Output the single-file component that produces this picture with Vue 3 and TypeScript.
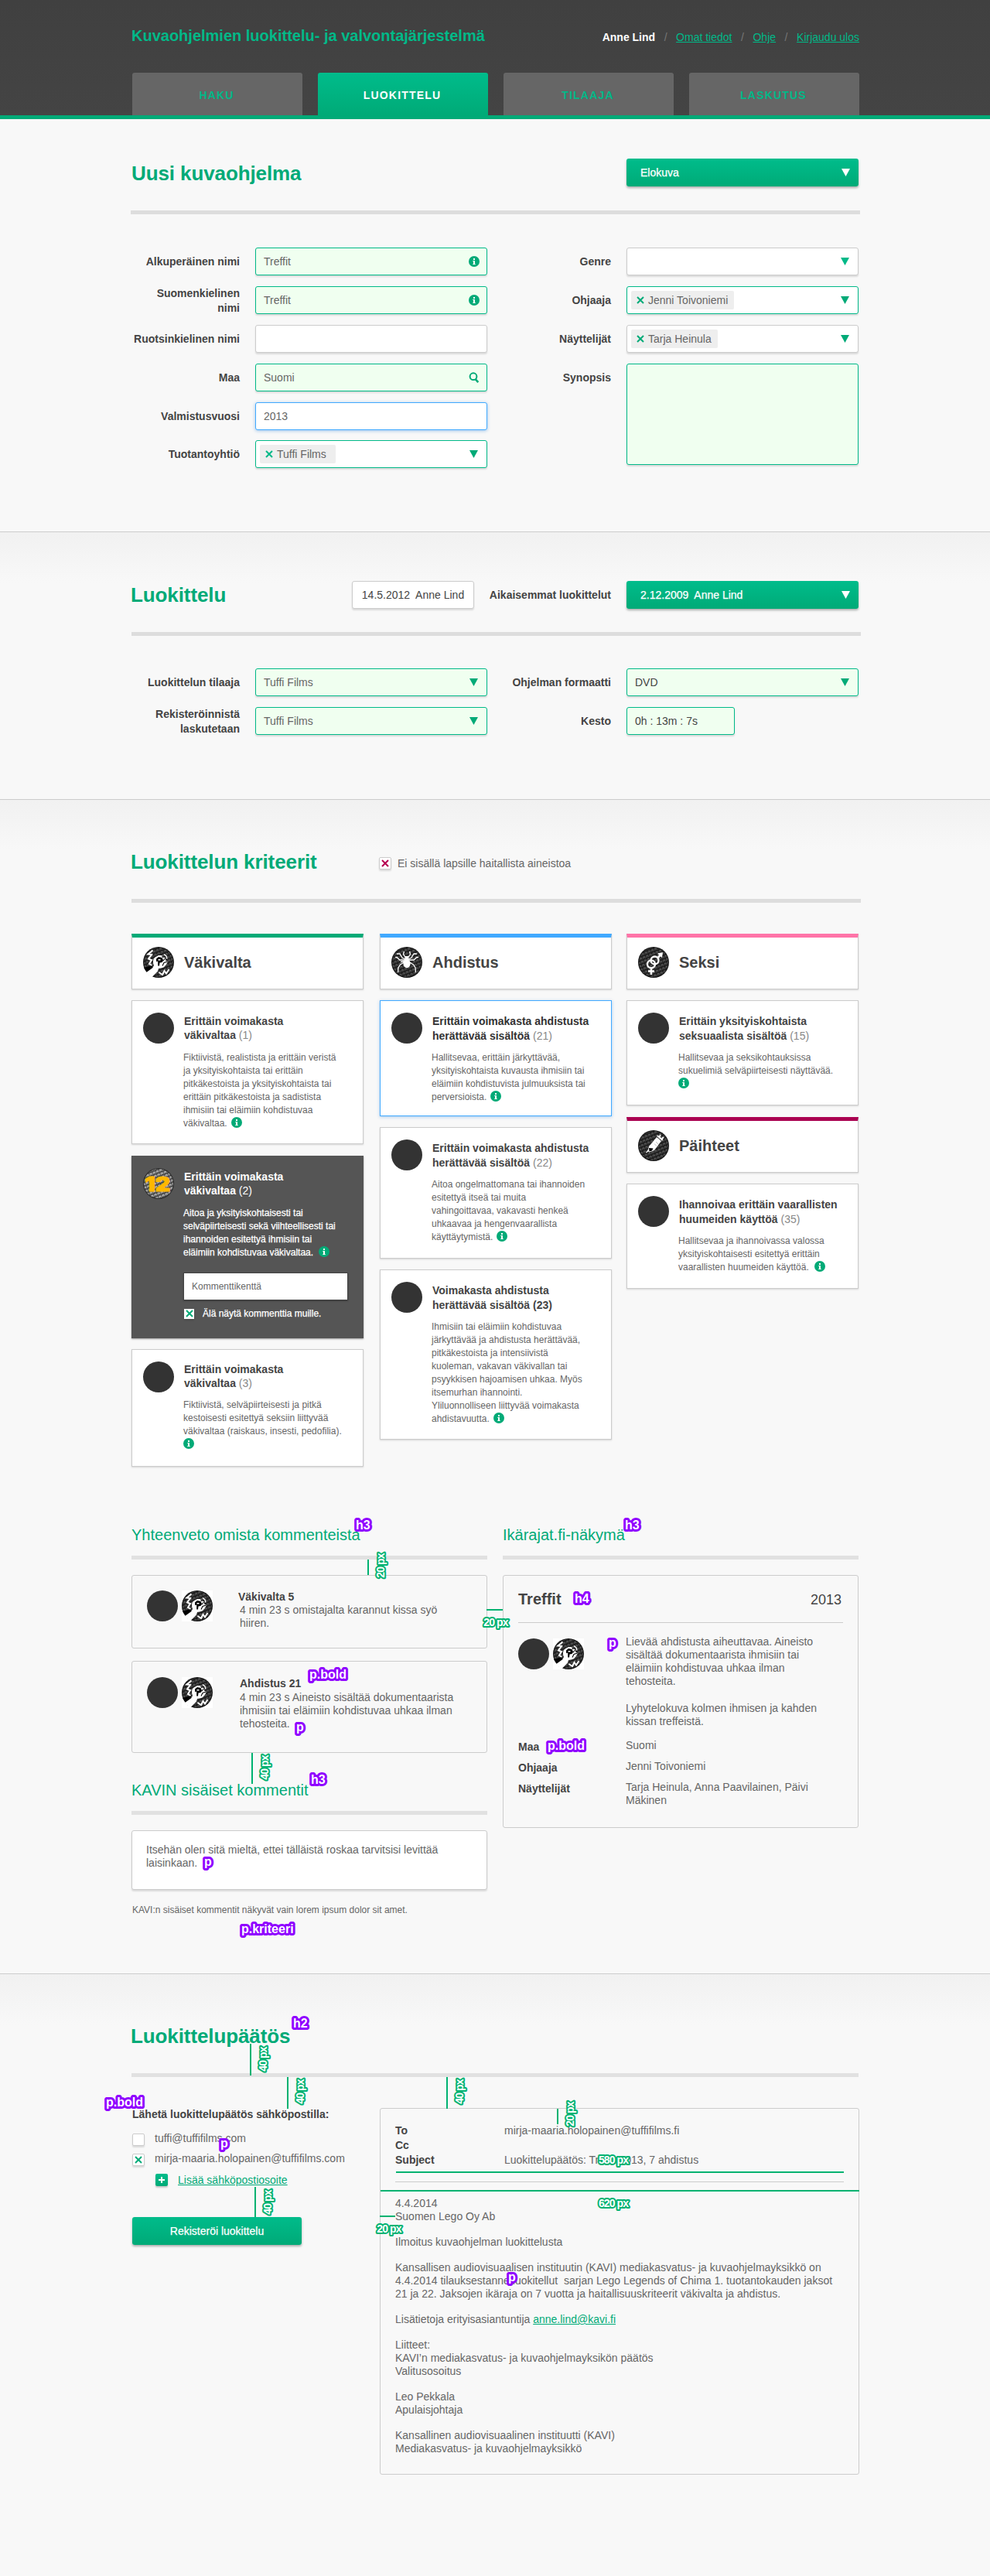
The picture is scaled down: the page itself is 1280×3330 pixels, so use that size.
<script setup lang="ts">
import { defineComponent, h } from 'vue'

interface Card {
  title: string[]
  count: string
  lines: string[]
  height: number
  strongCount?: boolean
  variant?: string
  comment?: boolean
  spaced?: boolean
}
interface Group {
  name: string
  icon: string
  accent: string
  cards: Card[]
}

const tabs = ['HAKU', 'LUOKITTELU', 'TILAAJA', 'LASKUTUS']

const columns: Group[][] = [
  [
    {
      name: 'Väkivalta',
      icon: 'fist',
      accent: '#00aa77',
      cards: [
        {
          title: ['Erittäin voimakasta', 'väkivaltaa'],
          count: '(1)',
          lines: ['Fiktiivistä, realistista ja erittäin veristä', 'ja yksityiskohtaista tai erittäin', 'pitkäkestoista ja yksityiskohtaista tai', 'erittäin pitkäkestoista ja sadistista', 'ihmisiin tai eläimiin kohdistuvaa', 'väkivaltaa.'],
          height: 186,
        },
        {
          title: ['Erittäin voimakasta', 'väkivaltaa'],
          count: '(2)',
          lines: ['Aitoa ja yksityiskohtaisesti tai', 'selväpiirteisesti sekä viihteellisesti tai', 'ihannoiden esitettyä ihmisiin tai', 'eläimiin kohdistuvaa väkivaltaa.'],
          height: 236,
          variant: 'dark',
          comment: true,
          spaced: true,
        },
        {
          title: ['Erittäin voimakasta', 'väkivaltaa'],
          count: '(3)',
          lines: ['Fiktiivistä, selväpiirteisesti ja pitkä', 'kestoisesti esitettyä seksiin liittyvää', 'väkivaltaa (raiskaus, insesti, pedofilia).', ''],
          height: 152,
          variant: 'tight',
        },
      ],
    },
  ],
  [
    {
      name: 'Ahdistus',
      icon: 'spider',
      accent: '#40a9ff',
      cards: [
        {
          title: ['Erittäin voimakasta ahdistusta', 'herättävää sisältöä'],
          count: '(21)',
          lines: ['Hallitsevaa, erittäin järkyttävää,', 'yksityiskohtaista kuvausta ihmisiin tai', 'eläimiin kohdistuvista julmuuksista tai', 'perversioista.'],
          height: 150,
          variant: 'focus',
        },
        {
          title: ['Erittäin voimakasta ahdistusta', 'herättävää sisältöä'],
          count: '(22)',
          lines: ['Aitoa ongelmattomana tai ihannoiden', 'esitettyä itseä tai muita', 'vahingoittavaa, vakavasti henkeä', 'uhkaavaa ja hengenvaarallista', 'käyttäytymistä.'],
          height: 170,
        },
        {
          title: ['Voimakasta ahdistusta', 'herättävää sisältöä'],
          count: '(23)',
          strongCount: true,
          lines: ['Ihmisiin tai eläimiin kohdistuvaa', 'järkyttävää ja ahdistusta herättävää,', 'pitkäkestoista ja intensiivistä', 'kuoleman, vakavan väkivallan tai', 'psyykkisen hajoamisen uhkaa. Myös', 'itsemurhan ihannointi.', 'Yliluonnolliseen liittyvää voimakasta', 'ahdistavuutta.'],
          height: 220,
        },
      ],
    },
  ],
  [
    {
      name: 'Seksi',
      icon: 'gender',
      accent: '#ff73a8',
      cards: [
        {
          title: ['Erittäin yksityiskohtaista', 'seksuaalista sisältöä'],
          count: '(15)',
          lines: ['Hallitsevaa ja seksikohtauksissa', 'sukuelimiä selväpiirteisesti näyttävää.', ''],
          height: 136,
        },
      ],
    },
    {
      name: 'Päihteet',
      icon: 'syringe',
      accent: '#aa0050',
      cards: [
        {
          title: ['Ihannoivaa erittäin vaarallisten', 'huumeiden käyttöä'],
          count: '(35)',
          lines: ['Hallitsevaa ja ihannoivassa valossa', 'yksityiskohtaisesti esitettyä erittäin', 'vaarallisten huumeiden käyttöä.'],
          height: 136,
          spaced: true,
        },
      ],
    },
  ],
]

const mail: string[][] = [
  ['4.4.2014', 'Suomen Lego Oy Ab'],
  ['Ilmoitus kuvaohjelman luokittelusta'],
  [
    'Kansallisen audiovisuaalisen instituutin (KAVI) mediakasvatus- ja kuvaohjelmayksikkö on',
    '4.4.2014 tilauksestanne luokitellut\u00a0 sarjan Lego Legends of Chima 1. tuotantokauden jaksot',
    '21 ja 22. Jaksojen ikäraja on 7 vuotta ja haitallisuuskriteerit väkivalta ja ahdistus.',
  ],
  ['Lisätietoja erityisasiantuntija '],
  ['Liitteet:', 'KAVI’n mediakasvatus- ja kuvaohjelmayksikön päätös', 'Valitusosoitus'],
  ['Leo Pekkala', 'Apulaisjohtaja'],
  ['Kansallinen audiovisuaalinen instituutti (KAVI)', 'Mediakasvatus- ja kuvaohjelmayksikkö'],
]

// Annotation tags: left edge and baseline of the text.
const tags = [
  { t: 'h3', x: 460, y: 1977 },
  { t: 'p.bold', x: 400, y: 2170 },
  { t: 'p', x: 383, y: 2238 },
  { t: 'h3', x: 808, y: 1977 },
  { t: 'h4', x: 743, y: 2072 },
  { t: 'p', x: 787, y: 2129 },
  { t: 'p.bold', x: 708, y: 2262 },
  { t: 'h3', x: 402, y: 2306 },
  { t: 'p', x: 264, y: 2412 },
  { t: 'p.kriteeri', x: 312, y: 2499 },
  { t: 'h2', x: 379, y: 2621 },
  { t: 'p.bold', x: 137, y: 2723 },
  { t: 'p', x: 285, y: 2776 },
  { t: 'p', x: 657, y: 2949 },
]

// Measuring lines.
const rules = [
  { x: 475, y: 2016, w: 2, h: 20 },
  { x: 629, y: 2080, w: 21, h: 2 },
  { x: 325, y: 2266, w: 2, h: 40 },
  { x: 323, y: 2642, w: 2, h: 41 },
  { x: 371, y: 2685, w: 2, h: 41 },
  { x: 577, y: 2685, w: 2, h: 41 },
  { x: 329, y: 2827, w: 2, h: 39 },
  { x: 720, y: 2726, w: 2, h: 20 },
  { x: 512, y: 2807, w: 579, h: 2 },
  { x: 492, y: 2831, w: 619, h: 2 },
  { x: 491, y: 2864, w: 20, h: 2 },
]

// Measurement captions, placed by their centre.
const sizes = [
  { t: '20 px', x: 492, y: 2024, v: true },
  { t: '20 px', x: 641, y: 2097, v: false },
  { t: '40 px', x: 342, y: 2285, v: true },
  { t: '40 px', x: 340, y: 2662, v: true },
  { t: '40 px', x: 388, y: 2704, v: true },
  { t: '40 px', x: 594, y: 2704, v: true },
  { t: '40 px', x: 346, y: 2847, v: true },
  { t: '20 px', x: 737, y: 2733, v: true },
  { t: '580 px', x: 793, y: 2792, v: false },
  { t: '620 px', x: 793, y: 2848, v: false },
  { t: '20 px', x: 503, y: 2881, v: false },
]

const Info = defineComponent({
  setup: () => () =>
    h('svg', { class: 'info', width: 14, height: 14, viewBox: '0 0 14 14' }, [
      h('circle', { cx: 7, cy: 7, r: 7, fill: '#00aa77' }),
      h('path', { d: 'M6 3h2v2H6zM5.3 6H8v4h.7v1H5.3v-1H6V7h-.7z', fill: '#fff' }),
    ]),
})

const Arrow = defineComponent({
  props: { fill: { type: String, default: '#00aa77' } },
  setup: (p) => () =>
    h('svg', { class: 'arrow', width: 11, height: 10, viewBox: '0 0 11 10' }, [h('path', { d: 'M0 0h11L5.5 10z', fill: p.fill })]),
})

const Cross = defineComponent({
  props: { color: { type: String, default: '#00aa77' }, size: { type: Number, default: 10 } },
  setup: (p) => () =>
    h('svg', { class: 'cross', width: p.size, height: p.size, viewBox: '0 0 10 10' }, [
      h('path', { d: 'M1 1l8 8M9 1l-8 8', stroke: p.color, 'stroke-width': 2, fill: 'none' }),
    ]),
})

const w = { fill: '#fff' }
const line = (d: string, sw: number, stroke = '#fff') => h('path', { d, fill: 'none', stroke, 'stroke-width': sw, 'stroke-linejoin': 'miter' })
const art: Record<string, () => unknown[]> = {
  fist: () => [
    h('path', { d: 'M1 27L12 24v10L8 37z', fill: '#000' }),
    h('path', { d: 'M3.500 33.500L12.500 27l1.500-3c-1.800-4-1.200-8.500 1.500-10.500L20 11l5 0 1.500 2.500L29 15l0 2.500 3 1.500-2.500 4.500-3 3-3.500 1-3 .5-1 3.500-8 8L7 36.500z', ...w }),
    line('M12.500 4.500L6.500 9.500l4.500 .5L7 15.500l4 1.500L8 22l3.500 2', 2),
    line('M20.500 33l4.500 3 2.500-5 2.500 3.500L33.500 29', 2),
    h('path', { d: 'M17 15.500l3-2.500 4.500 1 1.500 3-1.500 3-3 .5-.5 4-1.800 0 0-6-2 .8z', fill: '#000' }),
    h('path', { d: 'M19.500 16h3v1.500h-3z', ...w }),
    line('M24.500 11.500l1.500 2.500M28.500 15l-3 3.500M31.500 19l-4.500 1.500-2 4', 1.1, '#000'),
    line('M27 9.500l3 2.500 1 3.500', 1.4),
  ],
  spider: () => [
    h('ellipse', { cx: 20, cy: 21.5, rx: 4.6, ry: 5.8, ...w }),
    h('path', { d: 'M17 17l1-5h4l1 5z', ...w }),
    line('M18 16l-4-2-3-5-4 0M17 17l-6 0-4-3.500-2 0M16.500 20l-5 3-2.500 4-.5 6M17 18.500l-5 1M18 13.500l-2.500-4 1-3.500M22 16l4-2 3-5 4 0M23 17l6 0 4-3.500 2 0M23.500 20l5 3 2.500 4 .5 6M22 13.500l2.500-4-1-3.500', 1.3),
  ],
  gender: () => [
    h('circle', { cx: 17, cy: 22.3, r: 5, fill: 'none', stroke: '#fff', 'stroke-width': 2.3 }),
    h('circle', { cx: 21.5, cy: 17.5, r: 5, fill: 'none', stroke: '#fff', 'stroke-width': 2.3 }),
    line('M25.500 14l5-5M17 27.500V36M13 31.500h8', 2.5),
    h('path', { d: 'M25 8.500l7-1.500-1.200 7z', ...w }),
  ],
  syringe: () => [
    h('path', { d: 'M14 21L24 9l6 5-9 12-6.500 2.500-2-1.500z', ...w }),
    h('path', { d: 'M24 7.500l1.800-1 6.500 5.500-1.300 1.800z', ...w }),
    line('M27.500 9l1.500-3M30.500 11.500l2.500-2.500', 1.8),
    line('M14 25.500l-3.500 3.500', 1.2),
    h('path', { d: 'M14 23l5.500 .5-1.500 3-3.500 1z', fill: '#000' }),
    line('M23 15l3 3M21 17.500l3 3', 0.8, '#aaa'),
  ],
  twelve: () => [
    h('text', { x: 18.7, y: 29.5, 'text-anchor': 'middle', 'font-size': 26, 'font-weight': 900, 'font-family': 'Inter,"Liberation Sans",sans-serif', fill: '#ffb700', stroke: '#ffb700', 'stroke-width': 1, textLength: 33, lengthAdjust: 'spacingAndGlyphs' }, '12'),
  ],
}

let seq = 0
const Badge = defineComponent({
  props: { name: { type: String, required: true } },
  setup: (p) => {
    const id = `weave${seq++}`
    const light = p.name === 'twelve'
    return () =>
      h('svg', { class: 'badge', width: 40, height: 40, viewBox: '0 0 40 40' }, [
        h('defs', [
          h('pattern', { id, width: 4.5, height: 4.5, patternUnits: 'userSpaceOnUse', patternTransform: 'rotate(-22)' }, [
            h('path', { d: 'M.8 3.800V1h2.500v2.800M2 1v2', stroke: light ? '#b4b4b4' : '#666', 'stroke-width': light ? 1.1 : 0.8, fill: 'none' }),
          ]),
        ]),
        h('circle', { cx: 20, cy: 20, r: 20, fill: light ? '#2c2c2c' : '#151515' }),
        h('circle', { cx: 20, cy: 20, r: 19, fill: `url(#${id})` }),
        ...(art[p.name]() as []),
      ])
  },
})
</script>

<template>
  <div class="page">
    <header>
      <div class="top">
        <h1>Kuvaohjelmien luokittelu- ja valvontajärjestelmä</h1>
        <nav class="user"><b>Anne Lind</b><i>/</i><a>Omat tiedot</a><i>/</i><a>Ohje</a><i>/</i><a>Kirjaudu ulos</a></nav>
      </div>
      <nav class="tabs">
        <a v-for="t in tabs" :key="t" :class="{ active: t === 'LUOKITTELU' }">{{ t }}</a>
      </nav>
    </header>

    <section class="first">
      <div class="head">
        <h2>Uusi kuvaohjelma</h2>
        <div class="select green up"><span>Elokuva</span><Arrow fill="#fff" /></div>
      </div>
      <div class="bar shift"></div>
      <div class="form">
        <div class="col">
          <div class="row"><label>Alkuperäinen nimi</label><div class="field ok">Treffit<Info /></div></div>
          <div class="row"><label>Suomenkielinen<br />nimi</label><div class="field ok">Treffit<Info /></div></div>
          <div class="row"><label>Ruotsinkielinen nimi</label><div class="field"></div></div>
          <div class="row">
            <label>Maa</label>
            <div class="field ok">
              Suomi
              <svg class="lens" width="14" height="14" viewBox="0 0 14 14"><circle cx="6" cy="5.700" r="4.400" fill="none" stroke="#00aa77" stroke-width="2" /><path d="M8.500 9l3.800 4.200" stroke="#00aa77" stroke-width="2.600" /></svg>
            </div>
          </div>
          <div class="row five"><label>Valmistusvuosi</label><div class="field focus">2013</div></div>
          <div class="row">
            <label>Tuotantoyhtiö</label>
            <div class="field edge tagged"><span class="tag wide"><Cross color="#00b988" />Tuffi Films</span><Arrow /></div>
          </div>
        </div>
        <div class="col">
          <div class="row"><label>Genre</label><div class="field right"><Arrow fill="#00b988" /></div></div>
          <div class="row">
            <label>Ohjaaja</label>
            <div class="field edge tagged"><span class="tag"><Cross />Jenni Toivoniemi</span><Arrow /></div>
          </div>
          <div class="row">
            <label>Näyttelijät</label>
            <div class="field tagged"><span class="tag"><Cross />Tarja Heinula</span><Arrow /></div>
          </div>
          <div class="row"><label>Synopsis</label><div class="field ok area"></div></div>
        </div>
      </div>
    </section>

    <section class="second">
      <div class="head">
        <h2>Luokittelu</h2>
        <div class="field who">14.5.2012&nbsp; Anne Lind</div>
        <label class="earlier">Aikaisemmat luokittelut</label>
        <div class="select green"><span>2.12.2009&nbsp; Anne Lind</span><Arrow fill="#fff" /></div>
      </div>
      <div class="bar"></div>
      <div class="form">
        <div class="col">
          <div class="row"><label>Luokittelun tilaaja</label><div class="field ok">Tuffi Films<Arrow /></div></div>
          <div class="row"><label>Rekisteröinnistä<br />laskutetaan</label><div class="field ok">Tuffi Films<Arrow /></div></div>
        </div>
        <div class="col">
          <div class="row"><label>Ohjelman formaatti</label><div class="field ok ink">DVD<Arrow /></div></div>
          <div class="row"><label>Kesto</label><div class="field ok ink short">0h : 13m : 7s</div></div>
        </div>
      </div>
    </section>

    <section class="third">
      <div class="head">
        <h2>Luokittelun kriteerit</h2>
        <div class="harmless"><span class="box"><Cross color="#b5004f" /></span>Ei sisällä lapsille haitallista aineistoa</div>
      </div>
      <div class="bar"></div>

      <div class="criteria">
        <div v-for="(col, ci) in columns" :key="ci" class="ccol" :class="'c' + ci">
          <template v-for="g in col" :key="g.name">
            <div class="chead" :style="{ borderTopColor: g.accent }"><Badge :name="g.icon" /><h4>{{ g.name }}</h4></div>
            <article v-for="card in g.cards" :key="card.count" class="card" :class="card.variant" :style="{ height: card.height + 'px' }">
              <Badge v-if="card.variant === 'dark'" name="twelve" />
              <span v-else class="dot"></span>
              <div class="ctext">
                <h5>{{ card.title[0] }}<br />{{ card.title[1] }} <span :class="{ strong: card.strongCount }">{{ card.count }}</span></h5>
                <p>
                  <template v-for="(l, i) in card.lines" :key="i"><br v-if="i" />{{ l }}</template><span v-if="card.lines[card.lines.length - 1]" class="sp" :class="{ more: card.spaced }"></span><Info />
                </p>
                <template v-if="card.comment">
                  <div class="comment">Kommenttikenttä</div>
                  <div class="hide"><span class="box small"><Cross /></span>Älä näytä kommenttia muille.</div>
                </template>
              </div>
            </article>
          </template>
        </div>
      </div>

      <div class="summary">
        <div class="half">
          <h3>Yhteenveto omista kommenteista</h3>
          <div class="bar light"></div>
          <div class="note n1">
            <span class="dot"></span><span class="sq"><Badge name="fist" /></span>
            <p><b>Väkivalta 5</b><br />4 min 23 s omistajalta karannut kissa syö<br />hiiren.</p>
          </div>
          <div class="note n2">
            <span class="dot"></span><span class="sq"><Badge name="fist" /></span>
            <p><b>Ahdistus 21</b><br />4 min 23 s Aineisto sisältää dokumentaarista<br />ihmisiin tai eläimiin kohdistuvaa uhkaa ilman<br />tehosteita.</p>
          </div>
          <h3>KAVIN sisäiset kommentit</h3>
          <div class="bar light"></div>
          <div class="internal">Itsehän olen sitä mieltä, ettei tälläistä roskaa tarvitsisi levittää<br />laisinkaan.</div>
          <p class="fine">KAVI:n sisäiset kommentit näkyvät vain lorem ipsum dolor sit amet.</p>
        </div>
        <div class="half">
          <h3>Ikärajat.fi-näkymä</h3>
          <div class="bar light"></div>
          <div class="preview">
            <div class="ptop"><h4>Treffit</h4><span>2013</span></div>
            <div class="pmain">
              <span class="dot"></span><span class="sq"><Badge name="fist" /></span>
              <div class="ptext">
                <p>Lievää ahdistusta aiheuttavaa. Aineisto<br />sisältää dokumentaarista ihmisiin tai<br />eläimiin kohdistuvaa uhkaa ilman<br />tehosteita.</p>
                <p>Lyhytelokuva kolmen ihmisen ja kahden<br />kissan treffeistä.</p>
              </div>
            </div>
            <div class="pair"><b>Maa</b><span>Suomi</span></div>
            <div class="pair"><b>Ohjaaja</b><span>Jenni Toivoniemi</span></div>
            <div class="pair"><b>Näyttelijät</b><span>Tarja Heinula, Anna Paavilainen, Päivi<br />Mäkinen</span></div>
          </div>
        </div>
      </div>
    </section>

    <section class="fourth">
      <div class="head"><h2>Luokittelupäätös</h2></div>
      <div class="bar light full"></div>
      <div class="decision">
        <div class="send">
          <b>Lähetä luokittelupäätös sähköpostilla:</b>
          <div class="opt"><span class="box"></span>tuffi@tuffifilms.com</div>
          <div class="opt"><span class="box"><Cross /></span>mirja-maaria.holopainen@tuffifilms.com</div>
          <div class="opt add">
            <span class="plus"><svg width="8" height="8" viewBox="0 0 8 8"><path d="M3 0h2v3h3v2H5v3H3V5H0V3h3z" fill="#fff" /></svg></span><a>Lisää sähköpostiosoite</a>
          </div>
          <button type="button">Rekisteröi luokittelu</button>
        </div>
        <div class="mail">
          <div class="mhead">
            <div><b>To</b><span>mirja-maaria.holopainen@tuffifilms.fi</span></div>
            <div><b>Cc</b></div>
            <div><b>Subject</b><span>Luokittelupäätös: Treffit 2013, 7 ahdistus</span></div>
          </div>
          <p v-for="(para, i) in mail" :key="i">
            <template v-for="(l, j) in para" :key="j"><br v-if="j" />{{ l }}</template><a v-if="i === 3">anne.lind@kavi.fi</a>
          </p>
        </div>
      </div>
    </section>

    <svg class="marks" width="1280" height="3330" viewBox="0 0 1280 3330">
      <rect v-for="(r, i) in rules" :key="'r' + i" :x="r.x" :y="r.y" :width="r.w" :height="r.h" fill="#00b271" />
      <text v-for="(s, i) in sizes" :key="'s' + i" class="size" text-anchor="middle" y="5" :transform="`translate(${s.x} ${s.y})${s.v ? ' rotate(-90)' : ''}`">{{ s.t }}</text>
      <text v-for="(t, i) in tags" :key="'t' + i" class="el" :x="t.x" :y="t.y">{{ t.t }}</text>
    </svg>
  </div>
</template>

<style>
body {
  margin: 0;
  background: #f8f8f8;
}
svg {
  flex: none;
}
svg.info {
  vertical-align: -2px;
}
</style>

<style scoped>
* {
  box-sizing: border-box;
}
.page {
  position: relative;
  height: 3330px;
  overflow: hidden;
  background: #f8f8f8;
  font: 14px/18px 'Liberation Sans', Arial, Helvetica, sans-serif;
  color: #666;
}
h1, h2, h3, h4, h5, p {
  margin: 0;
}
a {
  color: #00aa77;
  text-decoration: underline;
}
header {
  height: 154px;
  background: linear-gradient(#404040, #444);
  border-bottom: 5px solid #00aa77;
  padding: 0 169px 0 171px;
}
.top {
  display: flex;
  justify-content: space-between;
  height: 94px;
}
h1 {
  font-size: 20px;
  line-height: 22px;
  color: #00b988;
  margin: 35px 0 0 -1px;
}
.user {
  margin-top: 39px;
  display: flex;
  color: #fff;
}
.user a {
  color: #00b988;
}
.user i {
  font-style: normal;
  color: #777;
  width: 27px;
  text-align: center;
}
.tabs {
  display: flex;
  gap: 20px;
}
.tabs a {
  width: 220px;
  height: 55px;
  border-radius: 3px 3px 0 0;
  background: #666;
  text-align: center;
  text-decoration: none;
  font-weight: bold;
  letter-spacing: 1.2px;
  line-height: 59px;
  color: #00b988;
  padding-right: 2px;
}
.tabs .active {
  background: linear-gradient(#00bc8b, #00aa77);
  color: #fff;
}
section {
  padding: 0 167px 0 170px;
}
.first {
  height: 533px;
  padding-top: 52px;
}
.second, .third, .fourth {
  border-top: 1px solid #ccc;
  background: linear-gradient(#f1f1f1, #f8f8f8 65px);
}
.second {
  height: 346px;
  padding-top: 63px;
}
.third {
  height: 1518px;
  padding-top: 62px;
}
.fourth {
  height: 779px;
  padding-top: 62px;
}
.head {
  display: flex;
  height: 66px;
  width: 940px;
}
h2 {
  font-size: 26px;
  line-height: 36px;
  letter-spacing: -0.1px;
  color: #00aa77;
  flex: 1;
  margin-left: -1px;
}
.first h2 {
  padding-left: 1px;
}
.bar {
  height: 5px;
  background: #ddd;
}
.shift {
  margin: 0 1px 0 -1px;
}
.light {
  background: #e1e1e1;
}
.full {
  width: 940px;
}
.select {
  width: 300px;
  height: 36px;
  border-radius: 3px;
  display: flex;
  justify-content: space-between;
  align-items: center;
  padding: 0 11px 0 18px;
  color: #fff;
  -webkit-text-stroke: 0.25px #fff;
  background: linear-gradient(#00bc8b, #00aa77);
  box-shadow: 0 2px 3px rgba(0, 0, 0, 0.3);
}
.up {
  margin-top: -1px;
}
.form {
  display: flex;
  gap: 20px;
  width: 940px;
  padding-top: 43px;
}
.second .form {
  padding-top: 42px;
}
.col {
  width: 460px;
}
.row {
  display: flex;
  gap: 20px;
  height: 36px;
  margin-bottom: 14px;
}
.five {
  margin-bottom: 13px;
}
label {
  width: 140px;
  height: 36px;
  padding-top: 1px;
  display: flex;
  align-items: center;
  justify-content: flex-end;
  text-align: right;
  font-weight: bold;
  color: #444;
  line-height: 19px;
  white-space: nowrap;
}
.field {
  width: 300px;
  height: 36px;
  border: 1px solid #ccc;
  border-radius: 3px;
  background: #fff;
  box-shadow: 0 2px 2px rgba(0, 0, 0, 0.12);
  padding: 0 11px 0 10px;
  line-height: 34px;
  display: flex;
  align-items: center;
  justify-content: space-between;
}
.field .info, .field .lens {
  margin-right: -2px;
}
.field.ok {
  background: #f0fff0;
}
.field.ok, .field.edge {
  border-color: #00b988;
}
.field.focus {
  border-color: #40a9ff;
  box-shadow: 0 1px 4px rgba(40, 130, 220, 0.45);
}
.field.ink, .field.who {
  color: #444;
}
.field.right {
  justify-content: flex-end;
}
.field.tagged {
  padding-left: 5px;
}
.field.area {
  height: 131px;
}
.field.short {
  width: 140px;
}
.tag {
  height: 24px;
  line-height: 24px;
  background: #eee;
  border-radius: 2px;
  display: flex;
  align-items: center;
  gap: 5px;
  padding: 0 8px 0 7px;
}
.tag.wide {
  padding-right: 12px;
}
.field.who {
  width: 158px;
  padding: 0;
  justify-content: center;
}
.earlier {
  width: 197px;
  padding-right: 20px;
}
.harmless {
  width: 620px;
  padding: 11px 0 0 0;
  line-height: 19px;
  display: flex;
  align-items: flex-start;
  gap: 8px;
}
.box {
  flex: none;
  width: 16px;
  height: 16px;
  border: 1px solid #ccc;
  border-radius: 2px;
  background: #fff;
  box-shadow: 0 2px 2px rgba(0, 0, 0, 0.12);
  display: flex;
  align-items: center;
  justify-content: center;
}
.harmless .box {
  margin-top: 1px;
}
.criteria {
  display: flex;
  padding-top: 40px;
  height: 806px;
}
.ccol {
  width: 300px;
}
.c1 {
  margin: 0 19px 0 21px;
}
.chead {
  height: 72px;
  border: 1px solid #ccc;
  border-top: 5px solid;
  background: #fff;
  box-shadow: 0 1px 2px rgba(0, 0, 0, 0.15);
  padding: 12px 14px;
  display: flex;
  gap: 13px;
}
h4 {
  font-size: 20px;
  line-height: 22px;
  color: #444;
}
.chead h4 {
  margin-top: 9px;
}
.card {
  margin-top: 14px;
  border: 1px solid #ccc;
  background: #fff;
  box-shadow: 0 1px 2px rgba(0, 0, 0, 0.15);
  padding: 15px 14px;
  display: flex;
  gap: 12px;
}
.card + .chead {
  margin-top: 15px;
}
.c0 .card + .card.dark {
  margin-top: 15px;
}
.dot {
  flex: none;
  width: 40px;
  height: 40px;
  border-radius: 50%;
  background: #333;
}
.ctext {
  white-space: nowrap;
  padding-top: 2px;
}
h5 {
  height: 48px;
  padding-left: 1px;
  font-size: 14px;
  line-height: 19px;
  color: #444;
}
.c0 h5 {
  line-height: 18px;
}
h5 span {
  font-weight: normal;
  color: #888;
}
h5 .strong {
  font-weight: bold;
  color: #444;
}
.ctext p {
  font-size: 12px;
  line-height: 17px;
}
.sp {
  display: inline-block;
  width: 5px;
}
.sp.more {
  width: 7px;
}
.focus h5 {
  color: #333;
}
.card.focus {
  border-color: #40a9ff;
  box-shadow: 0 1px 4px rgba(40, 130, 220, 0.4);
}
.dark {
  background: #555;
  border-color: #555;
  color: #fff;
  box-shadow: 0 1px 2px rgba(0, 0, 0, 0.4);
}
.dark h5, .dark h5 span {
  color: #fff;
}
.dark p, .dark .hide {
  -webkit-text-stroke: 0.25px #fff;
}
.tight .ctext {
  padding-top: 1px;
}
.tight h5 {
  height: 47px;
}
.comment {
  width: 213px;
  height: 36px;
  margin-top: 17px;
  border: 1px solid #444;
  background: #fff;
  color: #666;
  font-size: 12px;
  line-height: 34px;
  padding-left: 10px;
  box-shadow: 0 1px 2px rgba(0, 0, 0, 0.3);
}
.hide {
  display: flex;
  align-items: center;
  gap: 11px;
  font-size: 12px;
  margin: 8px 0 0 1px;
}
.small {
  width: 13px;
  height: 13px;
  border: 0;
  border-radius: 0;
}
.summary {
  display: flex;
  gap: 20px;
}
.half {
  width: 460px;
}
h3 {
  font-size: 20px;
  line-height: 22px;
  font-weight: normal;
  color: #00aa77;
  margin-bottom: 16px;
}
.note, .preview {
  border: 1px solid #ccc;
  border-radius: 3px;
}
.note {
  display: flex;
  height: 95px;
  margin-top: 20px;
  padding: 19px;
  line-height: 17px;
}
.note b, .pair b, .mhead b, .send > b {
  color: #444;
}
.sq {
  flex: none;
  width: 40px;
  height: 40px;
  margin-left: 5px;
  background: #fff;
}
.sq svg {
  display: block;
}
.note p {
  margin-left: 35px;
  white-space: nowrap;
}
.n1 b {
  margin-left: -2px;
}
.n2 {
  height: 119px;
  margin: 16px 0 37px;
  padding-top: 20px;
}
.n2 b {
  display: inline-block;
  height: 18px;
}
.internal {
  height: 77px;
  margin-top: 20px;
  border: 1px solid #ccc;
  border-radius: 3px;
  background: #fff;
  box-shadow: 0 2px 2px rgba(0, 0, 0, 0.12);
  padding: 16px 18px;
  line-height: 17px;
}
.fine {
  font-size: 12px;
  margin: 17px 0 0 1px;
}
.preview {
  height: 327px;
  margin-top: 20px;
  padding: 19px;
}
.ptop {
  display: flex;
  justify-content: space-between;
  height: 42px;
  border-bottom: 1px solid #ccc;
}
.ptop span {
  font-size: 18px;
  line-height: 24px;
  color: #444;
  padding-right: 2px;
}
.pmain {
  display: flex;
  padding-top: 20px;
  height: 150px;
}
.ptext {
  margin: -4px 0 0 54px;
  line-height: 17px;
  white-space: nowrap;
}
.ptext p + p {
  margin-top: 18px;
}
.pair {
  display: flex;
  line-height: 17px;
  margin-bottom: 10px;
}
.pair b {
  width: 139px;
  height: 17px;
  padding-top: 2px;
}
.decision {
  display: flex;
  padding-top: 40px;
}
.send {
  width: 321px;
  padding-left: 1px;
  margin-top: -1px;
}
.send > b {
  display: block;
  margin-bottom: 13px;
}
.opt {
  display: flex;
  gap: 13px;
  height: 26px;
  white-space: nowrap;
}
.opt .box {
  margin-top: 3px;
}
.add {
  padding: 2px 0 0 30px;
  height: 59px;
}
.plus {
  width: 16px;
  height: 16px;
  margin-top: 1px;
  border-radius: 2px;
  background: linear-gradient(#00bc8b, #00aa77);
  box-shadow: 0 2px 2px rgba(0, 0, 0, 0.2);
  display: flex;
  align-items: center;
  justify-content: center;
}
button {
  display: block;
  width: 219px;
  height: 36px;
  border: 0;
  border-radius: 3px;
  background: linear-gradient(#00bc8b, #00aa77);
  box-shadow: 0 2px 3px rgba(0, 0, 0, 0.3);
  color: #fff;
  -webkit-text-stroke: 0.25px #fff;
  font: inherit;
}
.mail {
  width: 620px;
  height: 474px;
  border: 1px solid #ccc;
  border-radius: 3px;
  padding: 19px;
  line-height: 17px;
  white-space: nowrap;
}
.mhead {
  height: 76px;
  border-bottom: 1px solid #ccc;
  margin-bottom: 19px;
  line-height: 19px;
}
.mhead div {
  display: flex;
}
.mhead b {
  width: 141px;
}
.mail p {
  margin-bottom: 16px;
}
.marks {
  position: absolute;
  top: 0;
  left: 0;
}
.marks text {
  fill: #fff;
  font-weight: bold;
  paint-order: stroke fill;
  stroke-linejoin: round;
}
.marks .size {
  font-size: 14px;
  letter-spacing: -0.9px;
  stroke: #00b271;
  stroke-width: 4px;
}
.marks .el {
  font-size: 16px;
  stroke: #9000ff;
  stroke-width: 6px;
}
</style>
